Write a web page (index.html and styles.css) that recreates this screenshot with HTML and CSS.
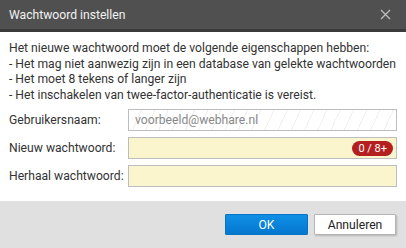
FILE: index.html
```html
<!DOCTYPE html>
<html lang="nl">
<head>
    <meta charset="UTF-8">
    <title>Wachtwoord instellen</title>
    <link rel="stylesheet" href="styles.css">
</head>
<body>
    <div class="dialog">
        <div class="titlebar">
            <span class="title">Wachtwoord instellen</span>
            <svg class="close" width="11" height="11" viewBox="0 0 11 11">
                <path d="M1 1 L10 10 M10 1 L1 10" stroke="#bdbdbd" stroke-width="1.3" fill="none"/>
            </svg>
        </div>
        <div class="content">
            <p class="intro">
                Het nieuwe wachtwoord moet de volgende eigenschappen hebben:<br>
                - Het mag niet aanwezig zijn in een database van gelekte wachtwoorden<br>
                - Het moet 8 tekens of langer zijn<br>
                - Het inschakelen van twee-factor-authenticatie is vereist.
            </p>
            <div class="form">
                <label class="label">Gebruikersnaam:</label>
                <div class="field readonly">voorbeeld@webhare.nl</div>

                <label class="label">Nieuw wachtwoord:</label>
                <div class="field required">
                    <span class="badge">0 / 8+</span>
                </div>

                <label class="label">Herhaal wachtwoord:</label>
                <div class="field required"></div>
            </div>
        </div>
        <div class="footer">
            <button type="button" class="btn btn-ok">OK</button>
            <button type="button" class="btn btn-cancel">Annuleren</button>
        </div>
    </div>
</body>
</html>
```

FILE: styles.css
```css
body {
    margin: 0;
    font-family: Roboto, "Liberation Sans", sans-serif;
    font-size: 12.15px;
    color: #333;
    background-color: #fff;
}

.dialog {
    width: 406px;
    height: 248px;
    display: flex;
    flex-direction: column;
}

.titlebar {
    height: 29px;
    background-color: #505050;
    border-bottom: 3px solid #3b3b3b;
    display: flex;
    align-items: center;
    justify-content: space-between;
    padding: 0 15px 0 9px;
    color: #f2f2f2;
}

.title {
    font-size: 12.15px;
}

.close {
    display: block;
}

.content {
    flex: 1;
    padding: 9px 9px 0 9px;
}

.intro {
    margin: 0 0 6px 0;
    line-height: 15.6px;
}

.form {
    display: grid;
    grid-template-columns: 119px 1fr;
    row-gap: 6px;
    align-items: center;
}

.label {
    color: #333;
    white-space: nowrap;
}

.field {
    position: relative;
    height: 20px;
    border: 1px solid #bdbdbd;
    padding: 0 6px;
    line-height: 20px;
}

.readonly {
    color: #888;
    background-color: #fff;
    background-image: repeating-linear-gradient(115deg, transparent 0, transparent 11px, #f1f1f1 11px, #f1f1f1 12px);
}

.required {
    background-color: #fbf5cd;
}

.badge {
    position: absolute;
    right: 3px;
    top: 3px;
    height: 15px;
    line-height: 15px;
    padding: 0 6px;
    border-radius: 8px;
    background-color: #b41f1f;
    color: #fff;
    font-size: 11px;
}

.footer {
    height: 47px;
    background-color: #e0e0e0;
    display: flex;
    justify-content: flex-end;
    align-items: flex-start;
    gap: 6px;
    padding: 13px 10px 0 0;
    box-sizing: border-box;
}

.btn {
    height: 21px;
    font-family: Roboto, "Liberation Sans", sans-serif;
    font-size: 12.15px;
    padding: 0;
    border-radius: 1px;
    cursor: pointer;
}

.btn-ok {
    width: 83px;
    background: linear-gradient(#0f8fe6, #0577cf);
    border: 1px solid #0a74c4;
    color: #fff;
}

.btn-cancel {
    width: 82px;
    background-color: #fff;
    border: 1px solid #b5b5b5;
    box-shadow: 1px 1px 2px rgba(0, 0, 0, 0.2);
    color: #222;
}
```
